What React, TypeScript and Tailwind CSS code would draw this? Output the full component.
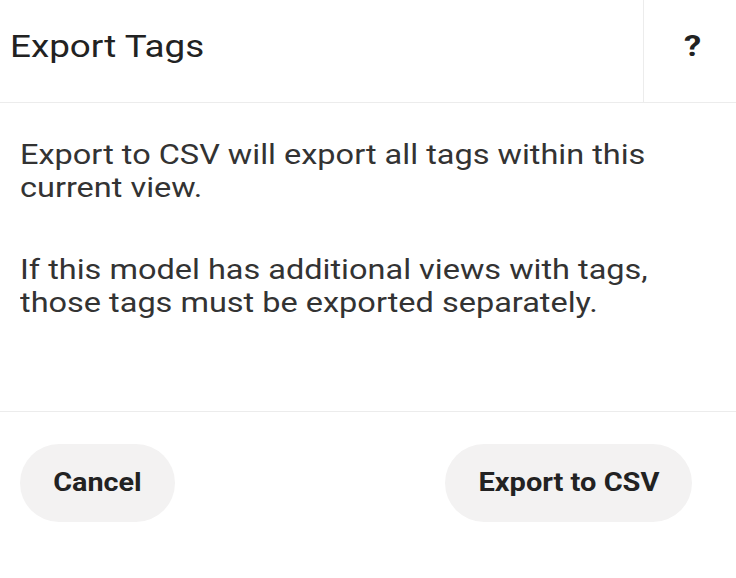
export default function App() {
  return (
    <div className="w-[736px] h-[578px] bg-white text-[#262626] overflow-hidden" style={{ fontFamily: 'Roboto, "Liberation Sans", sans-serif' }}>
      {/* Header */}
      <div className="flex h-[103px] border-b border-[#ececec]">
        <div className="flex-1 flex items-center pl-[10px] pb-[11px]">
          <h1 className="inline-block origin-left scale-x-[1.15] text-[32px] font-normal text-[#222]">Export Tags</h1>
        </div>
        <div className="w-[93px] border-l border-[#ececec] flex items-center justify-center pb-[11px] pl-[4px]">
          <span className="inline-block scale-x-[1.15] text-[30px] font-bold text-[#222]">?</span>
        </div>
      </div>

      {/* Body */}
      <div className="h-[309px] border-b border-[#ececec] px-[20px] pt-[35px] text-[28px] leading-[33px] text-[#333]">
        <div className="w-[600px] origin-left scale-x-[1.16]">
          <p>Export to CSV will export all tags within this current view.</p>
          <p className="mt-[49px]">If this model has additional views with tags, those tags must be exported separately.</p>
        </div>
      </div>

      {/* Footer */}
      <div className="flex justify-between items-start pl-[20px] pt-[32px] pr-[44px]">
        <button className="w-[155px] h-[78px] rounded-full bg-[#f3f2f2] text-[25px] font-bold text-[#222]">
          <span className="inline-block scale-x-[1.15]">Cancel</span>
        </button>
        <button className="w-[247px] h-[78px] rounded-full bg-[#f3f2f2] text-[25px] font-bold text-[#222]">
          <span className="inline-block scale-x-[1.16]">Export to CSV</span>
        </button>
      </div>
    </div>
  );
}
